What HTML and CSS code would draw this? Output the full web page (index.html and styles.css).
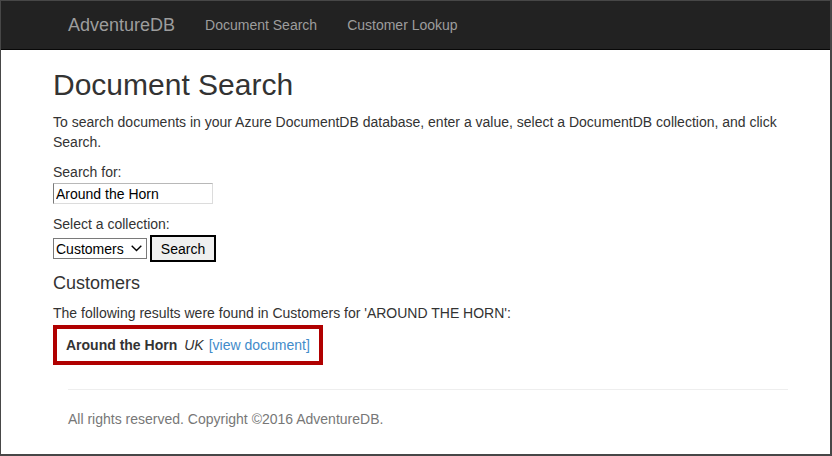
FILE: index.html
```html
<!DOCTYPE html>
<html lang="en">
<head>
<meta charset="utf-8">
<title>Document Search - AdventureDB</title>
<link rel="stylesheet" href="styles.css">
</head>
<body>
<div class="frame">
  <nav class="navbar">
    <a class="brand" href="#">AdventureDB</a>
    <a class="nav-link" href="#">Document Search</a>
    <a class="nav-link" href="#">Customer Lookup</a>
  </nav>
  <main class="content">
    <h1 class="title">Document Search</h1>
    <p class="intro">To search documents in your Azure DocumentDB database, enter a value, select a DocumentDB collection, and click Search.</p>
    <form class="search-form">
      <div class="field">
        <label class="label" for="q">Search for:</label>
        <input class="text-input" id="q" type="text" value="Around the Horn">
      </div>
      <div class="field">
        <label class="label" for="c">Select a collection:</label>
        <div class="row">
          <div class="select-box">
            <select class="select" id="c"><option>Customers</option></select>
            <svg class="chevron" width="11" height="7" viewBox="0 0 11 7"><path d="M0.7 0.8 L5.5 5.6 L10.3 0.8" fill="none" stroke="#000" stroke-width="1.4"/></svg>
          </div>
          <button class="btn" type="button">Search</button>
        </div>
      </div>
    </form>
    <h3 class="section-title">Customers</h3>
    <p class="results-note">The following results were found in Customers for 'AROUND THE HORN':</p>
    <div class="result"><strong class="name">Around the Horn</strong><em class="country">UK</em><a class="doc-link" href="#">[view document]</a></div>
    <footer class="footer">
      <hr class="rule">
      <p class="copyright">All rights reserved. Copyright ©2016 AdventureDB.</p>
    </footer>
  </main>
</div>
</body>
</html>
```

FILE: styles.css
```css
html, body {
  margin: 0;
  padding: 0;
  background: #fff;
}
body {
  font-family: "Liberation Sans", Arial, sans-serif;
  font-size: 14px;
  line-height: 20px;
  color: #333;
}
.frame {
  box-sizing: border-box;
  width: 832px;
  height: 456px;
  border-style: solid;
  border-color: #474747;
  border-width: 1px 2px 2px 1px;
  overflow: hidden;
}
.navbar {
  height: 48px;
  background: #222;
  border-bottom: 1px solid #080808;
  display: flex;
  align-items: center;
  padding-left: 52px;
}
.brand {
  color: #9d9d9d;
  font-size: 18px;
  text-decoration: none;
  padding: 0 15px;
  line-height: 48px;
}
.nav-link {
  color: #9d9d9d;
  font-size: 14px;
  text-decoration: none;
  padding: 0 15px;
  line-height: 48px;
}
.content {
  padding: 0 42px 0 52px;
}
.title {
  font-size: 30px;
  font-weight: normal;
  line-height: 33px;
  margin: 18px 0 11px;
  color: #333;
}
.intro {
  margin: 0 0 10px;
}
.search-form {
  margin: 0;
}
.field {
  margin-bottom: 10px;
}
.label {
  display: block;
}
.text-input {
  box-sizing: border-box;
  display: block;
  width: 160px;
  height: 21px;
  margin-top: 1px;
  padding: 0 2px;
  font-family: "Liberation Sans", Arial, sans-serif;
  font-size: 14px;
  color: #000;
  border: 1px solid;
  border-color: #b8b8b8 #dcdcdc #dcdcdc #7a7a7a;
  outline: none;
}
.row {
  display: flex;
  align-items: center;
  gap: 3px;
  margin-top: 1px;
}
.select-box {
  box-sizing: border-box;
  display: flex;
  align-items: center;
  height: 21px;
  width: 94px;
  border: 1px solid #7a7a7a;
  background: #fff;
}
.select {
  appearance: none;
  -webkit-appearance: none;
  border: none;
  background: transparent;
  font-family: "Liberation Sans", Arial, sans-serif;
  font-size: 14px;
  color: #000;
  padding: 0 0 0 2px;
  width: 76px;
  outline: none;
}
.chevron {
  display: block;
  margin-left: 1px;
}
.btn {
  box-sizing: border-box;
  height: 27px;
  width: 66px;
  border: 2px solid #000;
  background: #efefef;
  font-family: "Liberation Sans", Arial, sans-serif;
  font-size: 14px;
  color: #000;
  padding: 0;
}
.section-title {
  font-size: 18px;
  font-weight: normal;
  line-height: 20px;
  margin: 11px 0 10px;
}
.results-note {
  margin: 0 0 2px;
}
.result {
  display: flex;
  align-items: baseline;
  width: fit-content;
  line-height: 20px;
  border: 4px solid #b00000;
  padding: 6px 9px;
}
.name {
  font-weight: bold;
}
.country {
  font-style: italic;
  margin-left: 7px;
}
.doc-link {
  color: #428bca;
  text-decoration: none;
  margin-left: 5px;
}
.footer {
  margin-left: 15px;
}
.rule {
  border: none;
  border-top: 1px solid #eee;
  margin: 24px 0 0;
  height: 0;
}
.copyright {
  margin: 19px 0 0;
  color: #777;
}
```
